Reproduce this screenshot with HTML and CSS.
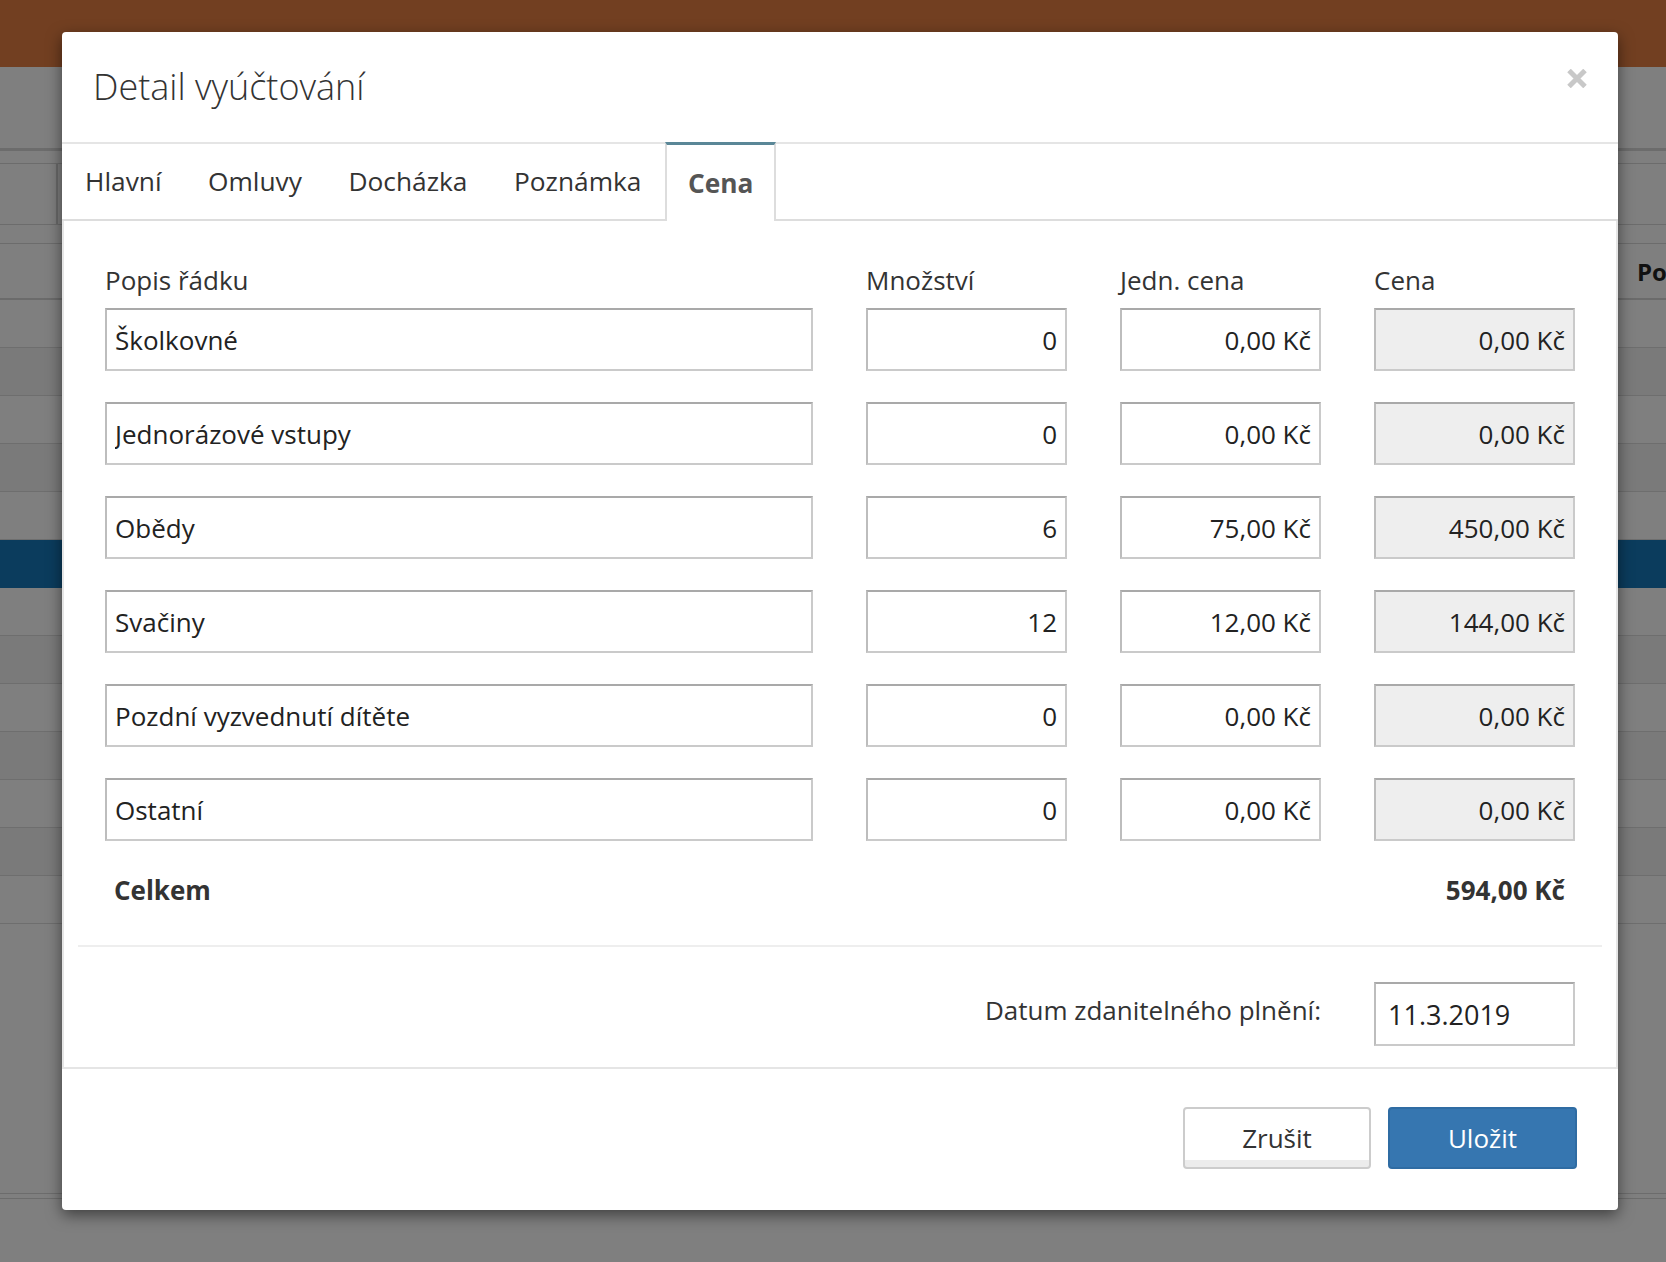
FILE: index.html
```html
<!DOCTYPE html>
<html lang="cs">
<head>
<meta charset="utf-8">
<title>Detail vyúčtování</title>
<link rel="stylesheet" href="styles.css">
</head>
<body>
<div class="page">
  <div class="topbar"></div>
  <div class="subbar"></div>
  <div class="toolbar"><div class="tool-sep"></div></div>
  <div class="bgtable">
    <div class="bg-head"><span class="bg-th">Po</span></div>
    <div class="bg-row"></div>
    <div class="bg-row odd"></div>
    <div class="bg-row"></div>
    <div class="bg-row odd"></div>
    <div class="bg-row"></div>
    <div class="bg-row selected"></div>
    <div class="bg-row"></div>
    <div class="bg-row odd"></div>
    <div class="bg-row"></div>
    <div class="bg-row odd"></div>
    <div class="bg-row"></div>
    <div class="bg-row odd"></div>
    <div class="bg-row"></div>
  </div>
  <div class="bg-foot"></div>

  <div class="modal">
    <div class="modal-header">
      <h4 class="modal-title">Detail vyúčtování</h4>
      <button class="close" aria-label="Zavřít">
        <svg width="20" height="19" viewBox="0 0 20 19"><path d="M2 1.5 L18 17.5 M18 1.5 L2 17.5" stroke="#c8c8c8" stroke-width="5" fill="none"/></svg>
      </button>
    </div>
    <ul class="tabs">
      <li class="tab">Hlavní</li>
      <li class="tab">Omluvy</li>
      <li class="tab">Docházka</li>
      <li class="tab">Poznámka</li>
      <li class="tab active">Cena</li>
    </ul>
    <div class="panel">
      <div class="grid head">
        <div class="lbl">Popis řádku</div>
        <div class="lbl">Množství</div>
        <div class="lbl">Jedn. cena</div>
        <div class="lbl">Cena</div>
      </div>
      <div class="grid body">
        <input class="field" value="Školkovné">
        <input class="field num" value="0">
        <input class="field num" value="0,00 Kč">
        <input class="field num ro" value="0,00 Kč" readonly>

        <input class="field" value="Jednorázové vstupy">
        <input class="field num" value="0">
        <input class="field num" value="0,00 Kč">
        <input class="field num ro" value="0,00 Kč" readonly>

        <input class="field" value="Obědy">
        <input class="field num" value="6">
        <input class="field num" value="75,00 Kč">
        <input class="field num ro" value="450,00 Kč" readonly>

        <input class="field" value="Svačiny">
        <input class="field num" value="12">
        <input class="field num" value="12,00 Kč">
        <input class="field num ro" value="144,00 Kč" readonly>

        <input class="field" value="Pozdní vyzvednutí dítěte">
        <input class="field num" value="0">
        <input class="field num" value="0,00 Kč">
        <input class="field num ro" value="0,00 Kč" readonly>

        <input class="field" value="Ostatní">
        <input class="field num" value="0">
        <input class="field num" value="0,00 Kč">
        <input class="field num ro" value="0,00 Kč" readonly>

        <div class="total-label">Celkem</div>
        <div class="total-value">594,00 Kč</div>
      </div>
      <hr class="sep">
      <div class="grid date-row">
        <label class="date-label">Datum zdanitelného plnění:</label>
        <input class="field date" value="11.3.2019">
      </div>
    </div>
    <div class="modal-footer">
      <button class="btn btn-default">Zrušit</button>
      <button class="btn btn-primary">Uložit</button>
    </div>
  </div>
</div>
</body>
</html>
```

FILE: styles.css
```css
* { box-sizing: border-box; }

html, body {
  margin: 0;
  padding: 0;
}

body {
  background: #7f7f7f;
  font-family: "Open Sans", "Noto Sans", "Liberation Sans", sans-serif;
  color: #333;
  width: 1666px;
  height: 1262px;
  overflow: hidden;
}

.page {
  position: relative;
  width: 1666px;
  height: 1262px;
}

/* ---------- background (under overlay) ---------- */
.topbar {
  height: 67px;
  background: #723f21;
}

.subbar {
  height: 81px;
  background: #7f7f7f;
}

.toolbar {
  border-top: 3px solid #6c6c6c;
  padding: 12px 0 18px;
}

.tool-sep {
  height: 62px;
  border-top: 1px solid #6c6c6c;
  border-bottom: 1px solid #6c6c6c;
}

.tool-sep::before {
  content: "";
  display: block;
  width: 56px;
  height: 100%;
  border-right: 2px solid #6a6a6a;
}

.bgtable {
  border-top: 1px solid #6c6c6c;
}

.bg-head {
  height: 56px;
  border-bottom: 2px solid #6b6b6b;
  display: flex;
  align-items: center;
  padding-left: 1637px;
}

.bg-th {
  font-weight: 700;
  font-size: 24px;
  color: #111;
}

.bg-row {
  height: 48px;
  border-bottom: 1px solid #6e6e6e;
  background: #7f7f7f;
}

.bg-row.odd {
  background: #7a7a7a;
}

.bg-row.selected {
  background: #0b3c5d;
  border-bottom-color: #0b3c5d;
}

.bg-foot {
  margin-top: 269px;
  height: 6px;
  border-top: 1px solid #6c6c6c;
  border-bottom: 1px solid #6c6c6c;
}

/* ---------- modal ---------- */
.modal {
  position: absolute;
  top: 32px;
  left: 62px;
  width: 1556px;
  background: #fff;
  border-radius: 4px;
  box-shadow: 0 5px 15px rgba(0, 0, 0, 0.5);
  display: flex;
  flex-direction: column;
}

.modal-header {
  height: 110px;
  display: flex;
  align-items: center;
  padding: 0 31px;
}

.modal-title {
  margin: 0;
  font-size: 36px;
  font-weight: 300;
  color: #333;
  line-height: 1.2;
}

.close {
  margin-left: auto;
  align-self: flex-start;
  margin-top: 37px;
  background: none;
  border: 0;
  padding: 0;
  width: 20px;
  height: 19px;
  display: block;
  cursor: pointer;
}

.close svg { display: block; }

/* tabs */
.tabs {
  list-style: none;
  margin: 0;
  padding: 0;
  display: flex;
  height: 79px;
  border-top: 2px solid #e5e5e5;
  border-bottom: 2px solid #dddddd;
}

.tab {
  padding: 0 23.5px 0 23px;
  font-size: 26.3px;
  line-height: 37px;
  color: #333;
  display: flex;
  align-items: center;
}

.tab.active {
  margin-top: -2px;
  margin-bottom: -2px;
  height: 79px;
  background: #fff;
  border-top: 3px solid #5a8797;
  border-left: 2px solid #dddddd;
  border-right: 2px solid #dddddd;
  padding: 0 21px;
  font-weight: 700;
  color: #555;
}

/* panel */
.panel {
  border-left: 2px solid #e5e5e5;
  border-right: 2px solid #e5e5e5;
  padding: 41px 0 21px;
}

.grid {
  display: grid;
  grid-template-columns: 708px 201px 201px 201px;
  column-gap: 53px;
  padding: 0 41px;
}

.grid.head {
  margin-bottom: 9px;
}

.grid.body {
  row-gap: 31px;
}

.lbl {
  font-size: 26px;
  line-height: 37px;
  color: #333;
}

.field {
  display: block;
  width: 100%;
  height: 63px;
  margin: 0;
  padding: 0 8px;
  font-family: "Open Sans", "Noto Sans", "Liberation Sans", sans-serif;
  font-size: 26px;
  color: #222;
  background: #fff;
  border: 2px solid #cacaca;
  border-top-color: #a9a9a9;
  border-left-color: #bdbdbd;
  border-radius: 0;
  outline: none;
}

.field.num {
  text-align: right;
}

.field.ro {
  background: #eeeeee;
}

.total-label,
.total-value {
  font-size: 26px;
  line-height: 37px;
  font-weight: 700;
  color: #333;
}

.total-label {
  grid-column: 1;
  padding-left: 9px;
}

.total-value {
  grid-column: 4;
  text-align: right;
  padding-right: 10px;
}

.sep {
  margin: 36px 14px 35px;
  border: 0;
  border-top: 2px solid #eeeeee;
  height: 0;
}

.date-row {
  align-items: center;
}

.date-label {
  grid-column: 1 / 4;
  justify-self: end;
  font-size: 26px;
  line-height: 37px;
  color: #333;
  padding-bottom: 7px;
}

.field.date {
  grid-column: 4;
  height: 64px;
  padding: 0 12px;
  font-size: 27px;
}

/* footer */
.modal-footer {
  border-top: 2px solid #e5e5e5;
  padding: 38px 41px 41px;
  display: flex;
  justify-content: flex-end;
  gap: 17px;
}

.btn {
  height: 62px;
  width: 188px;
  font-family: "Open Sans", "Noto Sans", "Liberation Sans", sans-serif;
  font-size: 26px;
  border-radius: 4px;
  cursor: pointer;
  padding: 0;
}

.btn-default {
  background: linear-gradient(#ffffff 0%, #ffffff 88%, #ececec 88%, #ececec 100%);
  border: 2px solid #cccccc;
  color: #333;
}

.btn-primary {
  width: 189px;
  background: #3676b0;
  border: 2px solid #2f6ca3;
  color: #fff;
}
```
